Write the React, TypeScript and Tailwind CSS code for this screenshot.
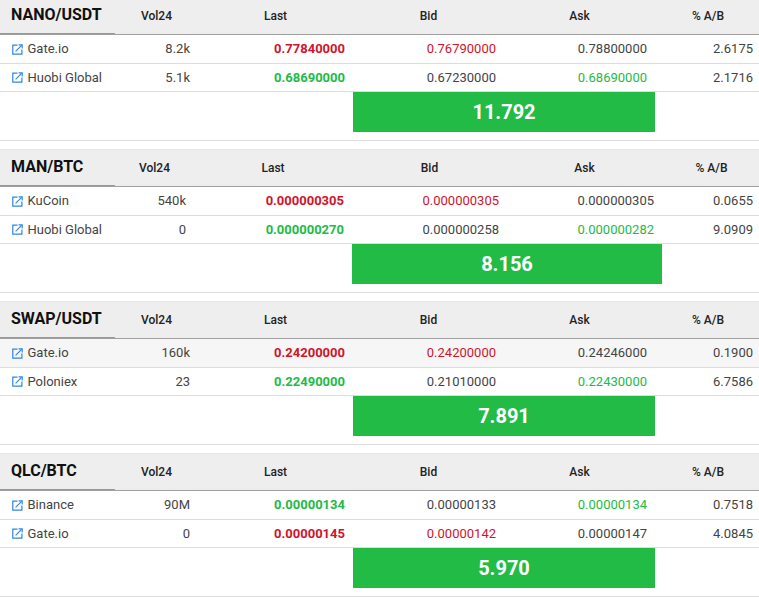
const A = "grid-cols-[115px_83px_155px_151px_151px_104px]";
const B = "grid-cols-[115px_79px_158px_155px_155px_97px]";
const R = "text-[#d0142c]";
const G = "text-[#22bb46]";

type Cell = { v: string; c?: string };
type Row = { name: string; vol: string; last: Cell; bid: Cell; ask: Cell; pct: string; hover?: boolean };
type Block = { pair: string; cols: string; pad: string; span: string; after: string; value: string; rows: Row[] };

const blocks: Block[] = [
  {
    pair: "NANO/USDT", cols: A, pad: "w-[353px]", span: "w-[302px]", after: "w-[104px]", value: "11.792",
    rows: [
      { name: "Gate.io", vol: "8.2k", last: { v: "0.77840000", c: R }, bid: { v: "0.76790000", c: R }, ask: { v: "0.78800000" }, pct: "2.6175" },
      { name: "Huobi Global", vol: "5.1k", last: { v: "0.68690000", c: G }, bid: { v: "0.67230000" }, ask: { v: "0.68690000", c: G }, pct: "2.1716" },
    ],
  },
  {
    pair: "MAN/BTC", cols: B, pad: "w-[352px]", span: "w-[310px]", after: "w-[97px]", value: "8.156",
    rows: [
      { name: "KuCoin", vol: "540k", last: { v: "0.000000305", c: R }, bid: { v: "0.000000305", c: R }, ask: { v: "0.000000305" }, pct: "0.0655" },
      { name: "Huobi Global", vol: "0", last: { v: "0.000000270", c: G }, bid: { v: "0.000000258" }, ask: { v: "0.000000282", c: G }, pct: "9.0909" },
    ],
  },
  {
    pair: "SWAP/USDT", cols: A, pad: "w-[353px]", span: "w-[302px]", after: "w-[104px]", value: "7.891",
    rows: [
      { name: "Gate.io", vol: "160k", last: { v: "0.24200000", c: R }, bid: { v: "0.24200000", c: R }, ask: { v: "0.24246000" }, pct: "0.1900", hover: true },
      { name: "Poloniex", vol: "23", last: { v: "0.22490000", c: G }, bid: { v: "0.21010000" }, ask: { v: "0.22430000", c: G }, pct: "6.7586" },
    ],
  },
  {
    pair: "QLC/BTC", cols: A, pad: "w-[353px]", span: "w-[302px]", after: "w-[104px]", value: "5.970",
    rows: [
      { name: "Binance", vol: "90M", last: { v: "0.00000134", c: G }, bid: { v: "0.00000133" }, ask: { v: "0.00000134", c: G }, pct: "0.7518" },
      { name: "Gate.io", vol: "0", last: { v: "0.00000145", c: R }, bid: { v: "0.00000142", c: R }, ask: { v: "0.00000147" }, pct: "4.0845" },
    ],
  },
];

function LinkIcon() {
  return (
    <svg width="11" height="11" viewBox="0 0 11 11" fill="none" stroke="#2f86dd" strokeWidth="1.2" className="shrink-0">
      <path d="M5.5 1.1H.8v9.1h9.1V5.5" />
      <path d="M3.6 7.4 9.6 1.4" />
      <path d="M6.6 .8h3.6v3.6" />
    </svg>
  );
}

function Head({ b }: { b: Block }) {
  return (
    <div className={`grid ${b.cols} h-[38px] bg-[#eeeeee] border-t border-[#e6e6e6] border-b border-b-[#a0a0a0] text-[12px] font-medium text-[#222222] items-center`}>
      <div className="relative h-full flex items-center pl-[11px] pb-[2px] text-[16px] font-bold text-[#111111]">
        {b.pair}
        <div className="absolute left-0 right-0 bottom-0 h-[1px] bg-[#999999]" />
      </div>
      {["Vol24", "Last", "Bid", "Ask"].map((h) => (
        <div key={h} className="text-center pb-[1px]">{h}</div>
      ))}
      <div className="text-center pb-[1px] pl-[2px]">% A/B</div>
    </div>
  );
}

function DataRow({ r, cols, last }: { r: Row; cols: string; last: boolean }) {
  return (
    <div className={`grid ${cols} items-center border-b border-[#dddddd] text-[13px] text-[#444444] ${last ? "h-[28px]" : "h-[29px]"} ${r.hover ? "bg-[#f6f6f6]" : ""}`}>
      <div className="flex items-center gap-[4.5px] pl-[12px]"><LinkIcon />{r.name}</div>
      <div className="text-right pr-[8px]">{r.vol}</div>
      <div className={`text-right pr-[8px] font-bold ${r.last.c}`}>{r.last.v}</div>
      <div className={`text-right pr-[8px] ${r.bid.c ?? ""}`}>{r.bid.v}</div>
      <div className={`text-right pr-[8px] ${r.ask.c ?? ""}`}>{r.ask.v}</div>
      <div className="text-right pr-[6px]">{r.pct}</div>
    </div>
  );
}

function TableBlock({ b }: { b: Block }) {
  return (
    <section className="mb-[8px]">
      <Head b={b} />
      {b.rows.map((r, i) => (
        <DataRow key={r.name} r={r} cols={b.cols} last={i === 1} />
      ))}
      <div className="flex h-[49px] border-b border-[#dddddd] items-start">
        <div className={b.pad} />
        <div className={`${b.span} h-[40px] bg-[#22bb46] text-white text-[20px] font-bold flex items-center justify-center`}>{b.value}</div>
        <div className={b.after} />
      </div>
    </section>
  );
}

export default function App() {
  return (
    <div className="w-[759px] h-[602px] overflow-hidden bg-white font-['Roboto',sans-serif]">
      <div className="-mt-[3px]">
        {blocks.map((b) => (
          <TableBlock key={b.pair} b={b} />
        ))}
      </div>
    </div>
  );
}
